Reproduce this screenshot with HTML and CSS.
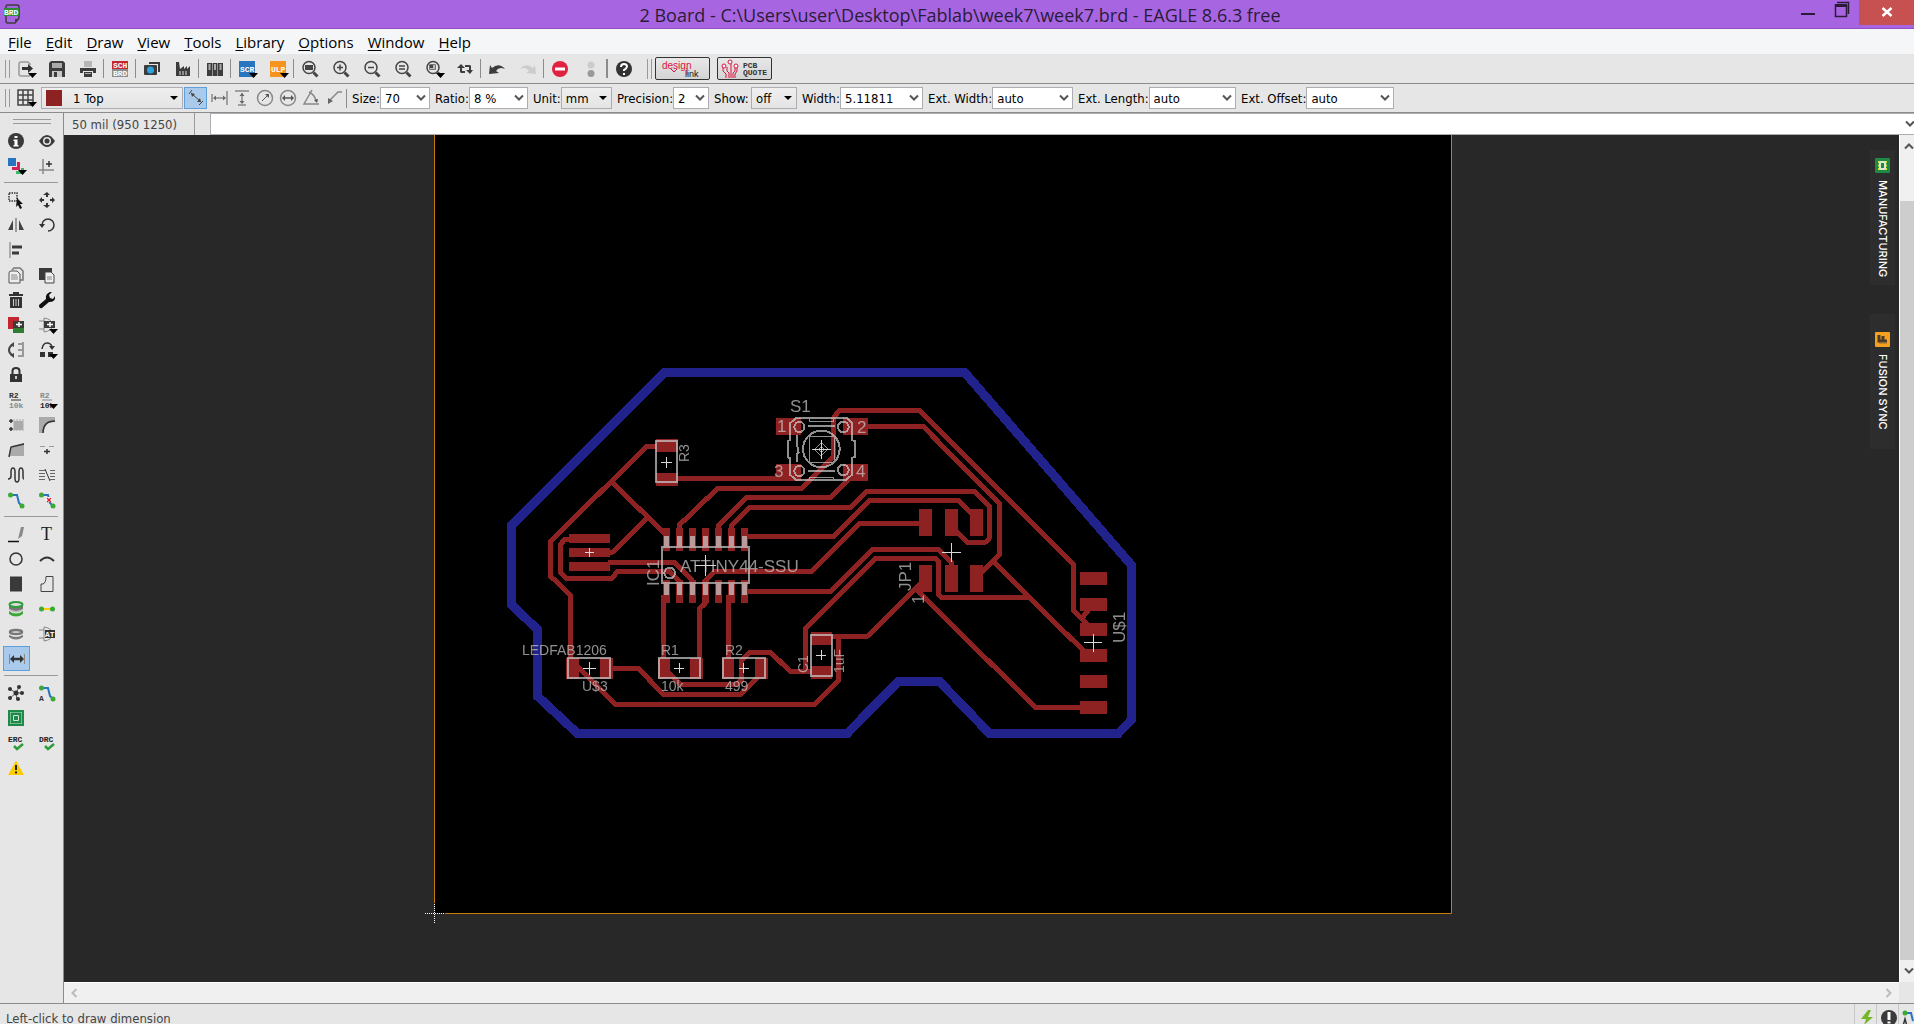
FILE: index.html
```html
<!DOCTYPE html>
<html lang="en">
<head>
    <meta charset="UTF-8">
    <meta name="viewport" content="width=device-width, initial-scale=1.0">
    <title>2 Board - EAGLE 8.6.3 free</title>
    <link rel="stylesheet" href="styles.css">
</head>
<body>
    <!-- shared shapes -->
    <svg class="defs" width="0" height="0">
        <defs>
            <path id="drop" d="M2 4h9l-4.500 5z" fill="#000"/>
            <g id="lens" fill="none" stroke="#454545">
                <circle cx="-1" cy="-1.500" r="6" stroke-width="1.500"/>
                <path d="M3.500 3.500l4 4" stroke-width="3"/>
            </g>
            <symbol id="chevron" viewBox="0 0 10 8"><path d="M1 1.500l4 4 4-4" fill="none" stroke="#555" stroke-width="2"/></symbol>
            <symbol id="triangle" viewBox="0 0 10 8"><path d="M1 2h8l-4 4z"/></symbol>
        </defs>
    </svg>

    <header class="titlebar">
        <svg class="app-icon" viewBox="0 0 16 20">
            <path d="M3 1h10q2 0 2 2v11l-4 5H4q-2 0-2-2V3q0-2 1-2z" fill="none" stroke="#3c3c3c" stroke-width="1.500"/>
            <path d="M11 19v-4h4z" fill="#3c3c3c"/>
            <rect y="4" width="15" height="8" fill="#2e8b35"/>
            <text x="0" y="11" fill="#fff">BRD</text>
        </svg>
        <h1>2 Board - C:\Users\user\Desktop\Fablab\week7\week7.brd - EAGLE 8.6.3 free</h1>
        <div class="window-buttons">
            <button aria-label="Minimize"><svg width="16" height="20" viewBox="0 0 16 20"><path d="M1 12h14v2H1z" fill="#2a1c38"/></svg></button>
            <button aria-label="Restore"><svg width="16" height="20" viewBox="0 0 16 20"><path d="M3 1.500h11.500V13M1 5h12M1.500 3v12.500h11V4" fill="none" stroke="#2a1c38" stroke-width="1.500"/><path d="M1 3h12v3H1z" fill="#2a1c38"/></svg></button>
            <button class="close" aria-label="Close"><svg width="12" height="10" viewBox="0 0 12 10"><path d="M1.500 1l9 8M10.500 1l-9 8" stroke="#fff" stroke-width="2.500"/></svg></button>
        </div>
    </header>

    <nav class="menu">
        <button><u>F</u>ile</button>
        <button><u>E</u>dit</button>
        <button><u>D</u>raw</button>
        <button><u>V</u>iew</button>
        <button><u>T</u>ools</button>
        <button><u>L</u>ibrary</button>
        <button><u>O</u>ptions</button>
        <button><u>W</u>indow</button>
        <button><u>H</u>elp</button>
    </nav>

    <div class="toolbar actions">
        <span class="grip"></span>
        <button class="tool" aria-label="Open"><svg viewBox="-12 -10 24 20"><path d="M4-4v-1l-2-2h-7q-2 0-2 2v10q0 2 2 2h8q1 0 1-2V4" fill="none" stroke="#999" stroke-width="1.500"/><path d="M-4-2h6v-3l5 4.500-5 4.500V1h-6z" fill="#333"/><use href="#drop"/></svg></button>
        <button class="tool" aria-label="Save"><svg viewBox="-12 -10 24 20"><path d="M-6-8H6l2 2V8H-8V-6z" fill="#3c3c3c"/><path d="M-5-6H5v5H-5z" fill="#aaa"/><path d="M-5 2H5v6H-5z" fill="#c8c8c8"/><path d="M-3 3h3v5h-3z" fill="#3c3c3c"/></svg></button>
        <button class="tool" aria-label="Print"><svg viewBox="-12 -10 24 20"><path d="M-4-7h8M-4-5h8M-4-3h8" stroke="#888"/><path d="M-8-1H8v5H5V2H-5v2h-3z" fill="#3c3c3c"/><path d="M-4 3h8v5h-8z" fill="#3c3c3c"/><path d="M-3 4.500h6" stroke="#aaa"/></svg></button>
        <span class="sep"></span>
        <button class="tool" aria-label="Schematic"><svg viewBox="-12 -10 24 20"><path d="M-8-8H8v8H-8z" fill="#c4262e"/><path d="M-8 0H8v8H-8z" fill="#8c8c8c"/><text x="-7" y="-1" fill="#fff">SCH</text><text x="-7" y="7" fill="#fff">BRD</text></svg></button>
        <span class="sep"></span>
        <button class="tool" aria-label="Export image"><svg viewBox="-12 -10 24 20"><path d="M-3-6H7v9" fill="none" stroke="#3c3c3c" stroke-width="2"/><rect x="-8" y="-4" width="13" height="10" rx="1" fill="#3c3c3c"/><circle cx="-1.500" cy="1" r="3.500" fill="#2ea3e0"/></svg></button>
        <button class="tool" aria-label="CAM processor"><svg viewBox="-12 -10 24 20"><path d="M-7-7h3l1 7 4-3v3l3-3v3l3-3v10H-7z" fill="#3c3c3c"/><path d="M-4 3h9M-4 5h9" stroke="#ddd" stroke-dasharray="2 1"/></svg></button>
        <span class="sep"></span>
        <button class="tool" aria-label="Library"><svg viewBox="-12 -10 24 20"><path d="M-8-6h5V7h-5zM-2.500-6h5V7h-5zM3-6h5V7H3z" fill="#3c3c3c"/><path d="M-6.500-5h2v6h-2zM-1-5h2v6h-2zM4.500-5h2v6h-2z" fill="#aaa"/></svg></button>
        <span class="sep"></span>
        <button class="tool" aria-label="Run script"><svg viewBox="-12 -10 24 20"><path d="M-8-8H8V8H-8z" fill="#2874be"/><text x="-7" y="3" fill="#fff">SCR</text><use href="#drop"/></svg></button>
        <button class="tool" aria-label="Run ULP"><svg viewBox="-12 -10 24 20"><path d="M-8-8H8V8H-8z" fill="#f7941e"/><text x="-7" y="3" fill="#fff">ULP</text><use href="#drop"/></svg></button>
        <span class="sep"></span>
        <button class="tool" aria-label="Zoom to fit"><svg viewBox="-12 -10 24 20"><use href="#lens"/><path d="M-5-4h8v5h-8z" fill="#454545"/></svg></button>
        <button class="tool" aria-label="Zoom in"><svg viewBox="-12 -10 24 20"><use href="#lens"/><path d="M-4-1.500h6M-1-4.500v6" stroke="#454545" stroke-width="1.500"/></svg></button>
        <button class="tool" aria-label="Zoom out"><svg viewBox="-12 -10 24 20"><use href="#lens"/><path d="M-4-1.500h6" stroke="#454545" stroke-width="1.500"/></svg></button>
        <button class="tool" aria-label="Redraw"><svg viewBox="-12 -10 24 20"><use href="#lens"/><path d="M-4-3h6M-4 0h6" stroke="#454545" stroke-width="1.500"/></svg></button>
        <button class="tool" aria-label="Zoom select"><svg viewBox="-12 -10 24 20"><use href="#lens"/><path d="M-4.500-4.500h6v5h-6z" fill="#bbb" stroke="#777"/><path d="M-4-4h3v3h-3z" fill="#454545"/><use href="#drop"/></svg></button>
        <button class="tool" aria-label="Swap"><svg viewBox="-12 -10 24 20"><path d="M-5 3v-4h-3l4-4 4 4h-3v3h3v2h-3q-2 0-2-1zM6-3v4h2L5 5 1 1h3v-3H0v-2h4q2 0 2 1z" fill="#3c3c3c"/></svg></button>
        <span class="sep"></span>
        <button class="tool" aria-label="Undo"><svg viewBox="-12 -10 24 20"><path d="M-8 5l1-9 2 3q7-6 13 1-6-3-9 2l3 2z" fill="#3c3c3c"/></svg></button>
        <button class="tool" aria-label="Redo"><svg viewBox="-12 -10 24 20"><path d="M8 5L7-4 5-1q-7-6-13 1 6-3 9 2l-3 2z" fill="#ccc"/></svg></button>
        <span class="sep"></span>
        <button class="tool" aria-label="Stop"><svg viewBox="-12 -10 24 20"><circle r="8" fill="#e0213f"/><path d="M-5-1.500H5v3H-5z" fill="#fff"/></svg></button>
        <button class="tool" aria-label="Go"><svg viewBox="-12 -10 24 20"><circle cy="-4" r="3.500" fill="#ccc"/><circle cy="4.500" r="3.500" fill="#999"/></svg></button>
        <span class="sep thick"></span>
        <button class="tool" aria-label="Help"><svg viewBox="-12 -10 24 20"><circle r="8" fill="#333"/><path d="M-3-2q0-3 3-3t3 2.500Q3-1 0 1v1" fill="none" stroke="#fff" stroke-width="2"/><path d="M-1 4h2v2h-2z" fill="#fff"/></svg></button>
        <span class="grip far"></span>
        <button class="brand" aria-label="Design link"><svg viewBox="0 0 51 19"><text x="5" y="10" font-size="10" fill="#dd1240">design</text><text x="28" y="18" font-size="9" fill="#111">link</text><path d="M30 9v7M14 10l3 3 3-3" stroke="#dd1240" fill="none"/></svg></button>
        <button class="brand" aria-label="PCB quote"><svg viewBox="0 0 51 19"><path d="M4 7v5l3 3v5M8 8v4l2 2v5M12 5v14M16 9v3l-2 2v5M18 8v4l-2 3v4" fill="none" stroke="#dd1240"/><g fill="#fff" stroke="#dd1240"><circle cx="5" cy="7" r="2"/><circle cx="11" cy="3" r="2"/><circle cx="17" cy="7" r="2"/></g><text class="pixel" x="24" y="9" fill="#333">PCB</text><text class="pixel" x="24" y="16" fill="#333">QUOTE</text></svg></button>
    </div>

    <div class="toolbar params">
        <span class="grip"></span>
        <button class="tool" aria-label="Grid"><svg viewBox="-12 -10 24 20"><path d="M-8-8H7V7H-8zM-3-8V7M2-8V7M-8-3H7M-8 2H7" fill="none" stroke="#444" stroke-width="1.500"/><use href="#drop"/></svg></button>
        <div class="combo drop layer">
            <span class="swatch"></span>
            <select aria-label="Layer"><option>1 Top</option></select>
            <svg><use href="#triangle"/></svg>
        </div>
        <div class="modes">
            <button class="mode on" aria-label="Parallel"><svg viewBox="-12 -10 24 20"><path d="M-5-5l10 9M-7-4l3-4M3 7l4-4" fill="none" stroke="#444"/><path d="M-5-5l4 1-3 3zM5 4L1 4l3-4z" fill="#444"/></svg></button>
            <button class="mode" aria-label="Horizontal"><svg viewBox="-12 -10 24 20"><path d="M-7-4v8M8-7V7M-5 0H6" stroke="#888" stroke-width="1.500"/><path d="M-6 0l3-2.500v5zM7 0L4-2.500v5z" fill="#666"/></svg></button>
            <button class="mode" aria-label="Vertical"><svg viewBox="-12 -10 24 20"><path d="M-7-7H7M-4 7h8M0-5V5" stroke="#888" stroke-width="1.500"/><path d="M0-5l2.500 3h-5zM0 6l2.500-3h-5z" fill="#666"/></svg></button>
            <button class="mode" aria-label="Radius"><svg viewBox="-12 -10 24 20"><circle r="7.500" fill="none" stroke="#888" stroke-width="1.500"/><path d="M-3 3l5-5" stroke="#555"/><path d="M4-4v4L0-4z" fill="#555"/></svg></button>
            <button class="mode" aria-label="Diameter"><svg viewBox="-12 -10 24 20"><circle r="7.500" fill="none" stroke="#888" stroke-width="1.500"/><path d="M-5 0H5" stroke="#555" stroke-width="1.500"/><path d="M-6 0l3-3v6zM6 0L3-3v6z" fill="#555"/></svg></button>
            <button class="mode" aria-label="Angle"><svg viewBox="-12 -10 24 20"><path d="M1-8l-8 14H8M-2-6q6 3 7 9" fill="none" stroke="#888" stroke-width="1.500"/><path d="M6 5L3 2l4-1z" fill="#555"/></svg></button>
            <button class="mode" aria-label="Leader"><svg viewBox="-12 -10 24 20"><path d="M8-6H4l-8 8" fill="none" stroke="#888" stroke-width="1.500"/><path d="M-6 6l0-6 5 3z" fill="#666"/></svg></button>
        </div>
        <span class="sep"></span>
        <div class="field size">
            <label for="size">Size:</label>
            <div class="combo"><select id="size"><option>70</option></select><svg><use href="#chevron"/></svg></div>
        </div>
        <div class="field ratio">
            <label for="ratio">Ratio:</label>
            <div class="combo"><select id="ratio"><option>8 %</option></select><svg><use href="#chevron"/></svg></div>
        </div>
        <div class="field unit">
            <label for="unit">Unit:</label>
            <div class="combo drop"><select id="unit"><option>mm</option></select><svg><use href="#triangle"/></svg></div>
        </div>
        <div class="field precision">
            <label for="precision">Precision:</label>
            <div class="combo"><select id="precision"><option>2</option></select><svg><use href="#chevron"/></svg></div>
        </div>
        <div class="field show">
            <label for="show">Show:</label>
            <div class="combo drop"><select id="show"><option>off</option></select><svg><use href="#triangle"/></svg></div>
        </div>
        <div class="field width">
            <label for="width">Width:</label>
            <div class="combo"><select id="width"><option>5.11811</option></select><svg><use href="#chevron"/></svg></div>
        </div>
        <div class="field ext-width">
            <label for="ext-width">Ext. Width:</label>
            <div class="combo"><select id="ext-width"><option>auto</option></select><svg><use href="#chevron"/></svg></div>
        </div>
        <div class="field ext-length">
            <label for="ext-length">Ext. Length:</label>
            <div class="combo"><select id="ext-length"><option>auto</option></select><svg><use href="#chevron"/></svg></div>
        </div>
        <div class="field ext-offset">
            <label for="ext-offset">Ext. Offset:</label>
            <div class="combo"><select id="ext-offset"><option>auto</option></select><svg><use href="#chevron"/></svg></div>
        </div>
    </div>

    <main class="workspace">
        <aside class="sidebar">
            <span class="side-grip"></span>
            <div class="palette">
                <button class="tool" aria-label="Info"><svg viewBox="-12 -10 24 20"><circle r="8" fill="#3a3a3a"/><path d="M-1.500-5h3v2h-3zM-2.500-1.500h4V4h1v1.500h-5V4h1V0h-1z" fill="#fff"/></svg></button>
                <button class="tool" aria-label="Show"><svg viewBox="-12 -10 24 20"><path d="M-8 0Q0-12 8 0 0 12-8 0z" fill="#3a3a3a"/><circle r="4" fill="#e6e6e6"/><circle r="2.500" fill="#3a3a3a"/></svg></button>
                <button class="tool" aria-label="Layers"><svg viewBox="-12 -10 24 20"><path d="M-8-8h8v8h-8z" fill="#2874be"/><path d="M1-4h3v8h-8V1h5z" fill="#d81f56"/><path d="M5 2h3v6H0V5h5z" fill="#3db56a"/><use href="#drop"/></svg></button>
                <button class="tool" aria-label="Mark"><svg viewBox="-12 -10 24 20"><path d="M-4-7V8M-8 4H7" stroke="#888" stroke-width="1.500"/><path d="M-1-2h6M2-5v6" stroke="#333" stroke-width="1.500"/></svg></button>
                <span class="rule"></span>
                <button class="tool" aria-label="Group"><svg viewBox="-12 -10 24 20"><path d="M-7-7H1V1h-8z" fill="none" stroke="#333" stroke-width="1.500" stroke-dasharray="1.500 1"/><path d="M1-2l6 6H4l2 4-2 1-2-4-2 2z" fill="#111"/></svg></button>
                <button class="tool" aria-label="Move"><svg viewBox="-12 -10 24 20"><path d="M0-8l3 3h-2v2h-2v-2h-3zM0 8l3-3h-2V3h-2v2h-3zM-8 0l3-3v2h2v2h-2v2zM8 0L5-3v2H3v2h2v2z" fill="#333"/></svg></button>
                <button class="tool" aria-label="Mirror"><svg viewBox="-12 -10 24 20"><path d="M0-7V7" stroke="#999" stroke-width="2"/><path d="M-3-5V5h-5zM3-5V5h5z" fill="#444"/></svg></button>
                <button class="tool" aria-label="Rotate"><svg viewBox="-12 -10 24 20"><path d="M-5 0A6 6 0 1 1 1 6" fill="none" stroke="#333" stroke-width="1.500"/><path d="M-8-1h6l-3 4z" fill="#333"/></svg></button>
                <button class="tool" aria-label="Align"><svg viewBox="-12 -10 24 20"><path d="M-6-8V8" stroke="#999" stroke-width="1.500"/><path d="M-4-4.500H6v3H-4zM-4 1.500h7v3h-7z" fill="#3a3a3a"/></svg></button>
                <span></span>
                <button class="tool" aria-label="Copy"><svg viewBox="-12 -10 24 20"><path d="M-4-5l2-2h6l3 3v9H4" fill="none" stroke="#777" stroke-width="1.500"/><path d="M-7-2q0-2 2-2h6l3 3v9h-11z" fill="#eee" stroke="#555"/><path d="M-5 0h6M-5 2h7M-5 4h7" stroke="#888"/></svg></button>
                <button class="tool" aria-label="Paste"><svg viewBox="-12 -10 24 20"><path d="M-8-7H5V5H-8z" fill="#3a3a3a"/><path d="M-2-3h6l3 3v8h-9z" fill="#eee" stroke="#444"/><path d="M0 2h5M0 4h5" stroke="#888"/></svg></button>
                <button class="tool" aria-label="Delete"><svg viewBox="-12 -10 24 20"><path d="M-7-6h4v-2h6v2h4v2H-7zM-6-3H6V8H-6z" fill="#333"/><path d="M-2.500-1v7M0-1v7M2.500-1v7" stroke="#ccc"/></svg></button>
                <button class="tool" aria-label="Change"><svg viewBox="-12 -10 24 20"><path d="M-8 5l7-6q-1-5 4-7h2L2-5l1 3 3 1 2-3q1 6-6 6l-7 6q-3 1-3-3z" fill="#111"/></svg></button>
                <button class="tool" aria-label="Add"><svg viewBox="-12 -10 24 20"><path d="M-8-8H3V4H-8z" fill="#c4262e"/><path d="M-3 3H8v5H-3z" fill="#2e7d32"/><path d="M-3-4H8v7H-3z" fill="#3a3a3a"/><path d="M0-.500h6M3-3v5" stroke="#fff" stroke-width="1.500"/></svg></button>
                <button class="tool" aria-label="Replace"><svg viewBox="-12 -10 24 20"><path d="M-8-4h5M-8 4h5M-3-7V7q8-1 9-7-1-6-9-7" fill="none" stroke="#888"/><path d="M-3-4H8v7H-3z" fill="#3a3a3a"/><path d="M0-.500h6M3-3v5" stroke="#fff" stroke-width="1.500"/><use href="#drop"/></svg></button>
                <button class="tool" aria-label="Pinswap"><svg viewBox="-12 -10 24 20"><path d="M7-8V7M7-6H2M7 0H2M7 6H2" stroke="#999" stroke-width="2" fill="none"/><path d="M-4-5q-3 2-3 5t3 5" fill="none" stroke="#444" stroke-width="2"/><path d="M-2-8v5l-4-2zM-2 8V3l-4 2z" fill="#444"/></svg></button>
                <button class="tool" aria-label="Gateswap"><svg viewBox="-12 -10 24 20"><path d="M-5-1q1-6 5-6t5 4" fill="none" stroke="#333" stroke-width="1.500"/><path d="M2-4h6L5 0zM-7 2h5v5h-5zM1 2h5v5H1z" fill="#333"/><use href="#drop"/></svg></button>
                <button class="tool" aria-label="Lock"><svg viewBox="-12 -10 24 20"><path d="M-6-1H6V7H-6z" fill="#333"/><path d="M-3.500 0v-4q0-3 3.500-3t3.500 3v4" fill="none" stroke="#333" stroke-width="2"/><path d="M-1 1h2v3h-2z" fill="#ccc"/></svg></button>
                <span></span>
                <button class="tool" aria-label="Name"><svg viewBox="-12 -10 24 20"><text x="-7" y="-2" fill="#333">R2</text><path d="M-5 0H5" stroke="#333"/><text x="-7" y="8" fill="#888">10k</text></svg></button>
                <button class="tool" aria-label="Value"><svg viewBox="-12 -10 24 20"><text x="-7" y="-2" fill="#888">R2</text><path d="M-5 0H5" stroke="#888"/><text x="-7" y="8" fill="#222">10k</text><use href="#drop"/></svg></button>
                <button class="tool" aria-label="Smash"><svg viewBox="-12 -10 24 20"><path d="M-2-4H7V5H-2z" fill="#aaa"/><path d="M-2-6v12M1-6v12M4-6v12M7-6v12" stroke="#aaa"/><path d="M-7-4h4M-5-6v4M-7 4h4M-5 2v4" stroke="#333" stroke-width="1.500"/></svg></button>
                <button class="tool" aria-label="Miter"><svg viewBox="-12 -10 24 20"><path d="M-8-8H8v5Q-3-3-3 8h-5z" fill="#aaa"/><path d="M8-4Q-4-4-4 8" fill="none" stroke="#333" stroke-width="1.500"/></svg></button>
                <button class="tool" aria-label="Split"><svg viewBox="-12 -10 24 20"><path d="M-4-4L8-7V6H-6z" fill="#aaa"/><path d="M-7 7l2-10L8-6" fill="none" stroke="#333" stroke-width="1.500"/></svg></button>
                <button class="tool" aria-label="Optimize"><svg viewBox="-12 -10 24 20"><path d="M-7-3.500h5M2-3.500h5" stroke="#999"/><path d="M-3 1.500h6M0-1v5" stroke="#333" stroke-width="1.500"/></svg></button>
                <button class="tool" aria-label="Meander"><svg viewBox="-12 -10 24 20"><path d="M-8 4q3 0 3-3v-4q0-4 2-4t2 4v6q0 4 2 4t2-4v-6q0-4 2-4t2 4v4q0 3 1 3" fill="none" stroke="#333" stroke-width="1.500"/></svg></button>
                <button class="tool" aria-label="Ripup lines"><svg viewBox="-12 -10 24 20"><path d="M-8-4.500h6M-8-1.500h6M-8 1.500h6M-8 4.500h6M3-4.500h5M3-1.500h5M3 1.500h5M3 4.500h5" stroke="#666"/><path d="M-2-6L3 6" stroke="#333"/></svg></button>
                <button class="tool" aria-label="Route"><svg viewBox="-12 -10 24 20"><path d="M-5-5h6L3 3l3 3" fill="none" stroke="#2874be" stroke-width="2"/><circle cx="-5.500" cy="-5" r="2.500" fill="#3aaa35"/><circle cx="6" cy="6" r="2.500" fill="#3aaa35"/></svg></button>
                <button class="tool" aria-label="Ripup"><svg viewBox="-12 -10 24 20"><path d="M-5-5h6L3 3l3 3" fill="none" stroke="#2874be" stroke-width="2"/><circle cx="-5.500" cy="-5" r="2.500" fill="#3aaa35"/><circle cx="6" cy="6" r="2.500" fill="#3aaa35"/><path d="M-1-3h6v5h-6z" fill="#fff"/><path d="M0-2l4 4M4-2L0 2" stroke="#d8232f" stroke-width="1.500"/></svg></button>
                <span class="rule"></span>
                <button class="tool" aria-label="Line"><svg viewBox="-12 -10 24 20"><path d="M-8 7.500H3" stroke="#111" stroke-width="1.500"/><path d="M5-7h3L6 2 2 5z" fill="#888"/></svg></button>
                <button class="tool" aria-label="Text"><svg viewBox="-12 -10 24 20"><text class="serif" x="-6" y="6" fill="#222">T</text></svg></button>
                <button class="tool" aria-label="Circle"><svg viewBox="-12 -10 24 20"><circle r="6" fill="none" stroke="#333" stroke-width="1.500"/></svg></button>
                <button class="tool" aria-label="Arc"><svg viewBox="-12 -10 24 20"><path d="M-7 2Q0-5 7 2" fill="none" stroke="#333" stroke-width="2"/></svg></button>
                <button class="tool" aria-label="Rectangle"><svg viewBox="-12 -10 24 20"><path d="M-6-7.500H6v15H-6z" fill="#3a3a3a"/></svg></button>
                <button class="tool" aria-label="Polygon"><svg viewBox="-12 -10 24 20"><path d="M-1-7.500h7v15H-6V0h2q3-1 3-7.500z" fill="none" stroke="#444"/></svg></button>
                <button class="tool" aria-label="Via"><svg viewBox="-12 -10 24 20"><path d="M-7-3v3q7 4 14 0v-3z" fill="#777"/><path d="M-7 0v1q7 5 14 0V0q-7 4-14 0z" fill="#bbb"/><path d="M-7 2v3q7 5 14 0V2q-7 5-14 0z" fill="#3aaa35"/><ellipse cy="-4.500" rx="6.500" ry="2.500" fill="#ddd" stroke="#2f9e3a" stroke-width="2"/></svg></button>
                <button class="tool" aria-label="Signal"><svg viewBox="-12 -10 24 20"><path d="M-5 0H5" stroke="#fc0" stroke-width="2"/><circle cx="-5.500" r="2.500" fill="#3aaa35"/><circle cx="5.500" r="2.500" fill="#3aaa35"/></svg></button>
                <button class="tool" aria-label="Hole"><svg viewBox="-12 -10 24 20"><path d="M-7 1v2q7 5 14 0V1q-7 4-14 0z" fill="#777"/><ellipse cy="-2" rx="6" ry="2" fill="#e6e6e6" stroke="#777" stroke-width="2.500"/></svg></button>
                <button class="tool" aria-label="Attribute"><svg viewBox="-12 -10 24 20"><path d="M-8-4h5M-8 4h5M-3-7V7q8-1 9-7-1-6-9-7" fill="none" stroke="#888"/><path d="M-2-4H8v8H-2z" fill="#333"/><text x="-2" y="3" fill="#fff">AT</text></svg></button>
                <button class="tool on" aria-label="Dimension"><svg viewBox="-12 -10 24 20"><path d="M-7.500-5V5M7.500-5V5" stroke="#888"/><path d="M-4 0h8" stroke="#333" stroke-width="2.500"/><path d="M-7 0l4-4v8zM7 0L3-4v8z" fill="#333"/></svg></button>
                <span></span>
                <span class="rule"></span>
                <button class="tool" aria-label="Ratsnest"><svg viewBox="-12 -10 24 20"><path d="M-6-4l6 4 6 0M3-6l-3 6 1 6M-6 5l6-5" stroke="#555" fill="none"/><g fill="#333"><circle cx="-6" cy="-4" r="2"/><circle cx="3" cy="-6" r="2"/><circle r="2.500"/><circle cx="6" r="2"/><circle cx="-6" cy="5" r="2"/><circle cx="2" cy="6" r="2"/></g></svg></button>
                <button class="tool" aria-label="Autorouter"><svg viewBox="-12 -10 24 20"><path d="M-5-5h6L3 3l3 3" fill="none" stroke="#2874be" stroke-width="2"/><circle cx="-5.500" cy="-5" r="2.500" fill="#3aaa35"/><circle cx="6" cy="6" r="2.500" fill="#3aaa35"/><text x="-8" y="8" fill="#333">A</text></svg></button>
                <button class="tool" aria-label="Plane"><svg viewBox="-12 -10 24 20"><path d="M-7-7H7V7H-7z" fill="#cfe6d6" stroke="#1e8a4a" stroke-width="2"/><path d="M-4.500-4.500h9v9h-9z" fill="#1e8a4a" stroke="#1e8a4a" stroke-width="2"/><path d="M-2.500-2.500h5v5h-5z" fill="#1e8a4a" stroke="#cfe6d6"/></svg></button>
                <span></span>
                <button class="tool" aria-label="ERC"><svg viewBox="-12 -10 24 20"><text x="-8" y="-1" fill="#222">ERC</text><path d="M-2 3l3 3 6-5" fill="none" stroke="#2f9e3a" stroke-width="2.500"/></svg></button>
                <button class="tool" aria-label="DRC"><svg viewBox="-12 -10 24 20"><text x="-8" y="-1" fill="#222">DRC</text><path d="M-2 3l3 3 6-5" fill="none" stroke="#2f9e3a" stroke-width="2.500"/></svg></button>
                <button class="tool" aria-label="Errors"><svg viewBox="-12 -10 24 20"><path d="M0-7.500L8 7H-8z" fill="#fc0"/><path d="M-1-3h2v5h-2zM-1 3.500h2v2h-2z" fill="#222"/></svg></button>
                <span></span>
            </div>
        </aside>

        <section class="editor">
            <div class="command-bar">
                <span class="coords">50 mil (950 1250)</span>
                <span class="gap"></span>
                <input type="text" aria-label="Command">
                <svg class="history"><use href="#chevron"/></svg>
            </div>

            <div class="view">
                <div class="canvas">
                    <svg class="board" viewBox="64 135 1835 847">
                        <rect x="434" y="100" width="1017" height="813" fill="#000"/>
                        <path d="M434.500 130V913.500H1451.500V130" fill="none" stroke="#c87a0a"/>

                        <!-- board drawing, three units to the pixel -->
                        <g transform="translate(500 360) scale(.333333)" fill="none" shape-rendering="crispEdges">
                            <path class="outline" d="M495 37L35 495V735L112 808V1008L232 1120H1042L1195 964H1318L1468 1120H1855L1894 1080V615L1394 37Z"/>
                            <g class="trace">
                                <path d="M480 259H440L151 545V648L211 705V895"/>
                                <path d="M338 368L495 522M440 475L337 577H325"/>
                                <path d="M210 538H195L181 553V637L200 656H335L352 635H510L538 665"/>
                                <path d="M325 607H522L578 662"/>
                                <path d="M532 355H900"/>
                                <path d="M538 510V495L653 385H905L1002 288V170L1020 151H1257L1721 615V752L1770 800M1745 775L1765 750"/>
                                <path d="M655 510V497L740 412H992L1050 355"/>
                                <path d="M694 510V497L750 442H1053L1100 394H1422L1468 440V535L1456 547H1402L1360 505"/>
                                <path d="M740 529H1002L1108 421H1374L1422 469"/>
                                <path d="M616 668V662L645 634H936L1078 491H1260"/>
                                <path d="M740 694H993L1117 569H1317L1354 606V620"/>
                                <path d="M935 934H870L812 877H748L725 900V960L710 973H540L500 933"/>
                                <path d="M916 934V805L1127 595H1307L1316 605V703L1325 712H1585"/>
                                <path d="M1095 200H1270L1499 432V583L1445 637M1480 605L1750 872"/>
                                <path d="M990 829H1102L1260 671M1245 685L1606 1042H1745"/>
                                <path d="M1015 829V963L945 1033H347L230 918"/>
                                <path d="M335 925H415L490 1003H722L780 945"/>
                                <path d="M490 705V895M616 720V730L598 747V895M685 705V895"/>
                            </g>
                            <g class="pad">
                                <path d="M207 522h123v27H207zM207 564h123v27H207zM207 606h123v27H207z"/>
                                <path d="M468 238h66v38h-66zM468 339h66v39h-66z"/>
                                <path d="M199 893h38v64h-38zM300 893h39v64h-39zM473 893h37v64h-37zM570 893h39v64h-39zM665 893h37v64h-37zM765 893h39v64h-39z"/>
                                <path d="M933 816h63v39h-63zM933 918h63v39h-63z"/>
                                <path d="M489 504h21v69h-21zM528 504h21v69h-21zM567 504h21v69h-21zM606 504h21v69h-21zM645 504h21v69h-21zM684 504h21v69h-21zM723 504h21v69h-21z"/>
                                <path d="M489 660h21v69h-21zM528 660h21v69h-21zM567 660h21v69h-21zM606 660h21v69h-21zM645 660h21v69h-21zM684 660h21v69h-21zM723 660h21v69h-21z"/>
                                <path d="M828 174h75v51h-75zM1029 174h75v51h-75zM828 312h75v51h-75zM1029 312h75v51h-75z"/>
                                <path d="M1257 447h39v81h-39zM1335 447h39v81h-39zM1410 447h39v81h-39zM1257 615h39v81h-39zM1335 615h39v81h-39zM1410 615h39v81h-39z"/>
                                <path d="M1740 636h81v39h-81zM1740 714h81v39h-81zM1740 789h81v39h-81zM1740 867h81v39h-81zM1740 945h81v39h-81zM1740 1023h81v39h-81z"/>
                            </g>
                            <g class="silk">
                                <path class="pins" d="M492 528h15v31h-15zM531 528h15v31h-15zM570 528h15v31h-15zM609 528h15v31h-15zM648 528h15v31h-15zM687 528h15v31h-15zM726 528h15v31h-15zM492 672h15v33h-15zM531 672h15v33h-15zM570 672h15v33h-15zM609 672h15v33h-15zM648 672h15v33h-15zM687 672h15v33h-15zM726 672h15v33h-15z"/>
                                <path d="M486 561h261v108H486zM469 242h62v125h-62zM204 894h126v60H204zM477 894h124v60H477zM669 894h127v60H669zM934 825h63v123h-63z"/>
                                <circle cx="509" cy="639" r="16"/>
                                <!-- push button -->
                                <path d="M888 174H1040L1056 190V241L1066 243V290L1056 294V344L1038 360H888L870 344V294L864 292V243L870 240V190Z"/>
                                <circle cx="898" cy="201" r="15"/>
                                <circle cx="1030" cy="201" r="16"/>
                                <circle cx="898" cy="333" r="15"/>
                                <circle cx="1030" cy="330" r="16"/>
                                <circle cx="964" cy="267" r="55"/>
                                <path d="M924 198H1005M924 333H1005M891 225V255L896 278L891 283V307"/>
                                <path class="thin" d="M928 176V184H1001V176M928 358V353H1001V358M928 230H1003V307H928ZM964 248L984 268L964 288L944 268ZM955 268L964 259L973 268L964 277Z"/>
                            </g>
                            <path class="cross" d="M936 268h56M964 240v56M958 268h12M1326 577h56M1354 549v56M1753 848h54M1780 821v54M949 886h30M964 871v30M483 307h32M499 291v32M254 577h28M268 563v28M248 925h40M268 905v40M523 925h30M538 910v30M717 925h30M732 910v30M584 616h64M616 585v62"/>
                        </g>

                        <g class="names">
                            <text x="790" y="412">S1</text>
                            <text x="777" y="432">1</text>
                            <text x="857" y="433">2</text>
                            <text x="774" y="477">3</text>
                            <text x="856" y="477">4</text>
                            <text x="680" y="572">ATTINY44-SSU</text>
                            <text transform="translate(659 586) rotate(-90)">IC1</text>
                            <text transform="translate(911 591) rotate(-90)">JP1</text>
                            <text transform="translate(924 604) rotate(-90)">1</text>
                            <text transform="translate(1125 643) rotate(-90)">U$1</text>
                        </g>
                        <g class="names values">
                            <text x="522" y="655">LEDFAB1206</text>
                            <text x="582" y="691">U$3</text>
                            <text x="661" y="655">R1</text>
                            <text x="661" y="691">10k</text>
                            <text x="725" y="655">R2</text>
                            <text x="725" y="691">499</text>
                            <text transform="translate(689 462) rotate(-90)">R3</text>
                            <text transform="translate(808 673) rotate(-90)">C1</text>
                            <text transform="translate(844 673) rotate(-90)">1uF</text>
                        </g>

                        <path d="M424 913.500h21M434.500 903v21" stroke="#282828"/>
                        <path d="M425 913.500h20M434.500 904v20" stroke="#fff" stroke-dasharray="1 1"/>
                    </svg>
                    <div class="tabs">
                        <button>
                            <svg viewBox="0 0 15 15"><rect width="15" height="15" rx="1" fill="#1e8a43"/><path d="M3 4h9M3 7.500h9M3 11h9" stroke="#d5df3d" stroke-width="2"/><rect x="4" y="3" width="7" height="9" rx="2" fill="#d9ead0"/><rect x="6" y="5" width="3" height="5" fill="#1e8a43"/></svg>
                            <span>MANUFACTURING</span>
                        </button>
                        <button>
                            <svg viewBox="0 0 15 15"><rect width="15" height="15" rx="1" fill="#f5a11f"/><path d="M4 3v6h8M8 9V4" fill="none" stroke="#4a3a28" stroke-width="3"/><path d="M4 11h8" stroke="#8a6a3a"/></svg>
                            <span>FUSION SYNC</span>
                        </button>
                    </div>
                </div>
                <div class="vscroll">
                    <button aria-label="Scroll up"><svg class="flip"><use href="#chevron"/></svg></button>
                    <div class="track"><span class="thumb"></span></div>
                    <button aria-label="Scroll down"><svg><use href="#chevron"/></svg></button>
                </div>
                <div class="hscroll">
                    <button aria-label="Scroll left"><svg viewBox="0 0 8 10"><path d="M6.500 1l-4 4 4 4" fill="none" stroke="#bbb" stroke-width="2"/></svg></button>
                    <button aria-label="Scroll right"><svg viewBox="0 0 8 10"><path d="M1.500 1l4 4-4 4" fill="none" stroke="#bbb" stroke-width="2"/></svg></button>
                </div>
            </div>
        </section>
    </main>

    <footer class="status">
        <span class="hint">Left-click to draw dimension</span>
        <span class="cell"><svg viewBox="0 0 14 16"><path d="M8 0L1 9h5l-2 6 9-8H8l3-7z" fill="#76b82a"/></svg></span>
        <span class="cell"><svg viewBox="0 0 16 16"><circle cx="8" cy="8" r="8" fill="#3a3a3a"/><path d="M6.500 2h3v8h-3zM6.500 11.500h3v2h-3z" fill="#fff"/></svg></span>
        <span class="cell"><svg viewBox="0 0 16 16"><path d="M3 3h6l2 8" fill="none" stroke="#2874be" stroke-width="2"/><circle cx="3" cy="3" r="2.500" fill="#3aaa35"/><path d="M1 16l2-7 2 7" fill="none" stroke="#333" stroke-width="1.500"/></svg></span>
    </footer>
</body>
</html>
```
FILE: styles.css
```css
* {
    box-sizing: border-box;
}

body {
    margin: 0;
    height: 100vh;
    display: flex;
    flex-direction: column;
    overflow: hidden;
    background-color: #e6e6e6;
    font-family: 'DejaVu Sans Condensed', 'Noto Sans', sans-serif;
    font-size: 13px;
    color: #000;
}

button {
    margin: 0;
    padding: 0;
    border: none;
    background: none;
    color: inherit;
    font: inherit;
}

.defs {
    position: absolute;
}

svg text {
    font-family: 'Liberation Sans', sans-serif;
}

/* lettering inside icons */
.app-icon text,
.tool text,
svg text.pixel {
    font-family: 'Liberation Mono', monospace;
    font-size: 8px;
    font-weight: 700;
}

.tool text.serif {
    font-family: 'Liberation Serif', serif;
    font-size: 18px;
    font-weight: 400;
}

/* title bar */
.titlebar {
    flex: none;
    height: 29px;
    display: grid;
    grid-template-columns: 1fr auto 1fr;
    align-items: start;
    background-color: #a865e2;
    border-bottom: 1px solid #9050c4;
}

.app-icon {
    width: 16px;
    height: 20px;
    margin: 4px;
}

.titlebar h1 {
    margin: 0;
    padding-left: 6px;
    font-family: 'Open Sans', sans-serif;
    font-size: 18px;
    font-weight: 400;
    line-height: 30px;
    color: #2a1c38;
    white-space: nowrap;
}

.window-buttons {
    display: flex;
    justify-content: flex-end;
}

.window-buttons button {
    width: 34px;
    height: 25px;
}

.window-buttons .close {
    width: 55px;
    background-color: #c75050;
}

/* menu */
.menu {
    flex: none;
    height: 25px;
    padding-left: 8px;
    display: flex;
    gap: 14px;
    background-color: #f5f6f8;
    font-family: 'Open Sans', sans-serif;
    font-size: 15px;
}

.menu u {
    text-underline-offset: 2px;
}

/* toolbars */
.toolbar {
    flex: none;
    display: flex;
    align-items: center;
    border-bottom: 1px solid #8c8c8c;
}

.actions {
    height: 30px;
}

.params {
    height: 29px;
}

.grip {
    flex: none;
    width: 5px;
    height: 18px;
    margin-left: 5px;
    border: 1px solid #999;
    border-width: 0 1px;
}

.grip.far {
    height: 20px;
    margin: 0 3px 0 8px;
}

.sep {
    flex: none;
    width: 1px;
    height: 19px;
    background-color: #8c8c8c;
}

.sep.thick {
    width: 2px;
}

.tool {
    flex: none;
    width: 31px;
    height: 25px;
    display: flex;
    align-items: center;
    justify-content: center;
}

.tool svg,
.mode svg {
    flex: none;
    width: 24px;
    height: 20px;
}

.brand {
    width: 55px;
    height: 23px;
    margin-right: 7px;
    border: 1px solid #333;
    border-radius: 2px;
    background: linear-gradient(#e8e8e8, #d4d4d4);
}

.brand svg {
    display: block;
    width: 51px;
    height: 19px;
    margin: 1px;
}

.modes {
    display: flex;
    margin: 0 1px;
}

.mode {
    width: 23px;
    height: 22px;
    border: 1px solid transparent;
    display: flex;
    align-items: center;
    justify-content: center;
}

.mode.on,
.palette .tool.on {
    background-color: #a9caea;
    border: 1px solid #5f9fdc;
}

/* labelled drop-downs */
.field {
    display: flex;
    align-items: center;
    justify-content: space-between;
    margin-left: 5px;
    white-space: nowrap;
    font-size: 13px;
}

.combo {
    position: relative;
    width: 83px;
    height: 22px;
}

.combo select {
    width: 100%;
    height: 100%;
    padding: 0 4px;
    appearance: none;
    border: 1px solid #acacb2;
    border-radius: 0;
    background: #fff;
    color: #000;
    font: inherit;
}

.combo.drop select {
    background: linear-gradient(#efefef, #e4e4e4);
}

.combo svg {
    position: absolute;
    right: 4px;
    top: 7px;
    width: 10px;
    height: 8px;
    pointer-events: none;
}

.layer {
    width: 142px;
}

.layer select {
    padding-left: 31px;
}

.swatch {
    position: absolute;
    left: 5px;
    top: 3px;
    width: 16px;
    height: 16px;
    background-color: #8e2222;
}

.size { width: 78px; }
.size .combo { width: 50px; }
.ratio { width: 93px; }
.ratio .combo { width: 59px; }
.unit { width: 79px; }
.unit .combo { width: 52px; }
.precision { width: 92px; }
.precision .combo { width: 36px; }
.show { width: 83px; }
.show .combo { width: 46px; }
.width { width: 121px; }
.ext-width { width: 145px; }
.ext-length { width: 158px; }
.ext-length .combo { width: 90px; }
.ext-offset { width: 153px; }
.ext-offset .combo { width: 90px; }

/* left palette */
.workspace {
    flex: 1;
    min-height: 0;
    display: flex;
    border-bottom: 1px solid #8c8c8c;
}

.sidebar {
    flex: none;
    width: 64px;
    border-right: 1px solid #8c8c8c;
}

.side-grip {
    display: block;
    width: 38px;
    height: 5px;
    margin: 6px 0 4px 13px;
    border: 1px solid #999;
    border-width: 1px 0;
}

.palette {
    display: grid;
    grid-template-columns: 31px 31px;
}

.palette .tool.on {
    width: 27px;
    margin-left: 3px;
}

.rule {
    grid-column: 1 / 3;
    height: 1px;
    margin: 4px;
    background-color: #999;
}

/* editor */
.editor {
    flex: 1;
    min-width: 0;
    display: flex;
    flex-direction: column;
}

.command-bar {
    flex: none;
    position: relative;
    height: 22px;
    display: flex;
}

.coords {
    width: 131px;
    padding-left: 8px;
    border-right: 1px solid #999;
    line-height: 24px;
    color: #444;
}

.gap {
    width: 15px;
}

.command-bar input {
    flex: 1;
    border: 1px solid #acacb2;
    border-right: none;
    background-color: #fff;
}

.history {
    position: absolute;
    right: -1px;
    top: 7px;
    width: 10px;
    height: 8px;
}

.view {
    flex: 1;
    min-height: 0;
    display: grid;
    grid-template-columns: 1fr 15px;
    grid-template-rows: 1fr 21px;
}

.canvas {
    position: relative;
    min-height: 0;
    overflow: hidden;
    background-color: #282828;
}

.board {
    position: absolute;
    width: 100%;
    height: 100%;
}

.outline {
    stroke: #22228c;
    stroke-width: 27;
}

.trace {
    stroke: #8e2222;
    stroke-width: 15;
    stroke-linejoin: round;
}

.pad {
    fill: #8e2222;
}

.silk {
    stroke: #cdcdcd;
    stroke-width: 6;
    opacity: 0.7;
}

.silk .pins {
    fill: #cdcdcd;
    stroke: none;
}

.silk .thin {
    stroke-width: 3;
}

.cross {
    stroke: #d8d8d8;
    stroke-width: 3;
}

.names {
    font-size: 17px;
    fill: #cdcdcd;
    opacity: 0.7;
}

.values {
    font-size: 14px;
}

.tabs {
    position: absolute;
    top: 15px;
    right: 4px;
    display: flex;
    flex-direction: column;
    gap: 29px;
}

.tabs button {
    width: 25px;
    height: 135px;
    padding-top: 8px;
    display: flex;
    flex-direction: column;
    align-items: center;
    gap: 7px;
    background-color: #2d2d2d;
    color: #fff;
}

.tabs button + button {
    padding-top: 18px;
}

.tabs svg {
    width: 15px;
    height: 15px;
}

.tabs span {
    writing-mode: vertical-rl;
    font-family: Inter, sans-serif;
    font-size: 11px;
    line-height: 14px;
    font-weight: 500;
}

/* scroll bars */
.vscroll {
    display: flex;
    flex-direction: column;
    border-left: 1px solid #fff;
    background-color: #f0f0f0;
}

.vscroll button {
    height: 22px;
    padding-left: 4px;
}

.vscroll svg {
    display: block;
    width: 10px;
    height: 8px;
}

.flip {
    transform: rotate(180deg);
}

.track {
    flex: 1;
    padding-top: 44px;
    display: flex;
}

.thumb {
    flex: 1;
    background-color: #cdcdcd;
}

.hscroll {
    display: flex;
    justify-content: space-between;
    padding: 0 6px;
    border-top: 1px solid #fff;
    background-color: #f0f0f0;
}

.hscroll svg {
    display: block;
    width: 8px;
    height: 10px;
}

/* status bar */
.status {
    flex: none;
    height: 20px;
    display: flex;
    overflow: hidden;
    color: #444;
}

.hint {
    flex: 1;
    padding: 6px;
    line-height: 18px;
}

.cell {
    width: 22px;
    padding: 6px 2px 0 4px;
    border-left: 1px solid #c8c8c8;
}

.cell:last-child {
    width: 16px;
    padding-left: 3px;
}

.cell svg {
    display: block;
    width: 16px;
    height: 16px;
}
```
